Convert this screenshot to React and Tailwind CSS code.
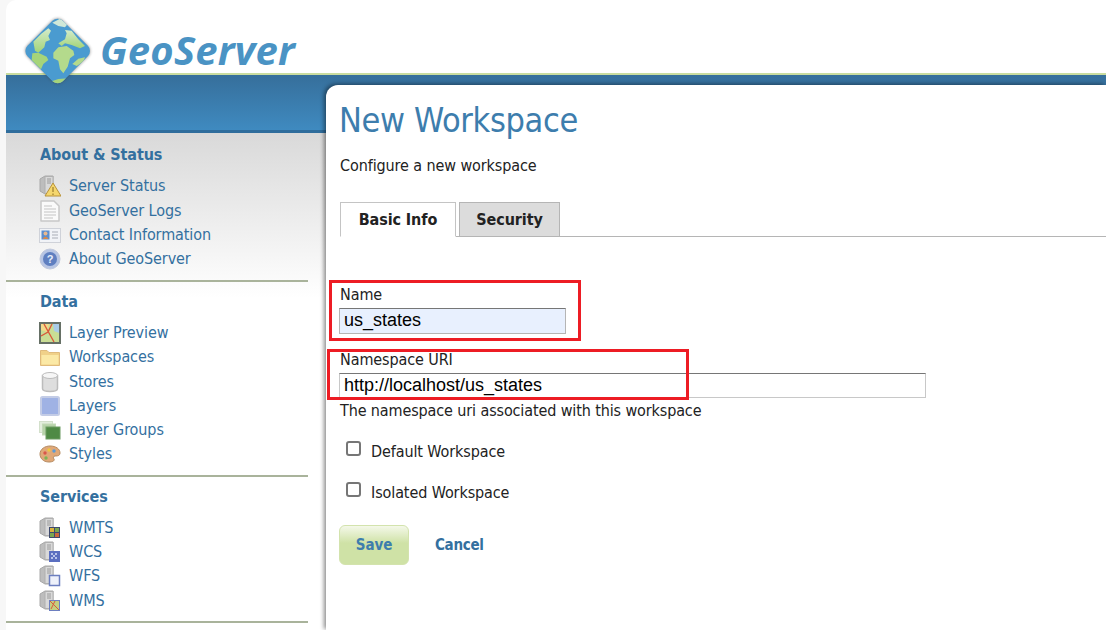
const sans = "font-['DejaVu_Sans_Condensed','DejaVu_Sans',sans-serif] [font-stretch:condensed] tracking-[-0.1px]";

const Logo = () => (
  <svg width="90" height="80" viewBox="0 0 270 240" className="absolute left-[9px] top-[10px]">
    <defs>
      <clipPath id="geo-clip">
        <rect x="53" y="48" width="150" height="150" rx="22" transform="rotate(45 128 123)" />
      </clipPath>
      <filter id="geo-blur" x="-20%" y="-20%" width="140%" height="140%">
        <feGaussianBlur stdDeviation="5" />
      </filter>
      <linearGradient id="geo-land" x1="0" y1="0" x2="0" y2="1">
        <stop offset="0" stopColor="#d3ebcb" />
        <stop offset="1" stopColor="#a4d477" />
      </linearGradient>
    </defs>
    <rect x="53" y="48" width="150" height="150" rx="22" transform="rotate(45 128 123)" fill="#444" opacity="0.65" filter="url(#geo-blur)" />
    <g clipPath="url(#geo-clip)">
      <rect width="270" height="240" fill="#4a9bd0" />
      <path d="M112 38 L135 26 L158 42 L150 52 L130 48 Z" fill="#cfe8d8" />
      <path d="M55 95 L78 72 L100 55 L108 62 L100 78 L105 90 L92 95 L88 112 L70 128 L60 122 Z" fill="url(#geo-land)" />
      <path d="M52 130 L70 128 L95 140 L100 150 L85 162 L78 178 L65 165 L50 150 Z" fill="#a6d47a" />
      <path d="M130 100 L150 88 L155 70 L150 60 L170 62 L190 88 L210 108 L195 115 L170 105 L150 100 L140 108 Z" fill="url(#geo-land)" />
      <path d="M115 128 L130 112 L155 108 L175 122 L178 135 L165 145 L158 170 L145 190 L135 178 L130 152 L115 145 Z" fill="#b4da8c" />
      <path d="M172 162 L190 146 L210 142 L205 155 L185 168 Z" fill="#b4da8c" />
      <path d="M110 214 L130 207 L160 205 L130 226 Z" fill="#a6d47a" />
    </g>
  </svg>
);

const Server = ({ children }) => (
  <svg width="22" height="22" viewBox="0 0 22 22">
    <path d="M1 4 L6 1 L14 1 L14 19 L6 19 L1 16 Z" fill="#bdbdbd" stroke="#a8a8a8" />
    <rect x="6" y="1.5" width="8" height="17" fill="#d9d9d9" stroke="#b0b0b0" />
    <path d="M8 4 H12 M8 6 H12 M8 8 H12" stroke="#9a9a9a" />
    {children}
  </svg>
);

const icons = {
  status: (
    <Server>
      <path d="M14 8 L22 21 H6 Z" fill="#f5d76e" stroke="#b8923a" />
      <path d="M14 12 V17 M14 18.5 V20" stroke="#8a6a20" />
    </Server>
  ),
  logs: (
    <svg width="22" height="22" viewBox="0 0 22 22">
      <path d="M2 1 H15 L20 6 V21 H2 Z" fill="#fafafa" stroke="#c8c8c8" strokeWidth="1.5" strokeLinejoin="round" />
      <path d="M5 6 H13 M5 9 H17 M5 12 H17 M5 15 H17 M5 18 H14" stroke="#c4c4c4" />
    </svg>
  ),
  contact: (
    <svg width="22" height="22" viewBox="0 0 22 22">
      <rect x="0.5" y="4.5" width="21" height="14" fill="#f1f3f7" stroke="#cfd2d9" />
      <rect x="2.5" y="6.5" width="8" height="9" fill="#5b8fd0" />
      <circle cx="6.5" cy="9.5" r="2" fill="#e9b98f" />
      <path d="M3.5 15 Q6.5 10 9.5 15" fill="#d8894a" />
      <path d="M13 8 H19 M13 11 H19 M13 14 H19" stroke="#a9adb6" />
    </svg>
  ),
  about: (
    <svg width="22" height="22" viewBox="0 0 22 22">
      <circle cx="11" cy="11" r="10" fill="#b7c5e4" stroke="#c0c8dc" />
      <circle cx="11" cy="11" r="7" fill="#5f7fc0" />
      <text x="11" y="15" textAnchor="middle" fontSize="11" fontWeight="700" fill="#e8eefa" fontFamily="Liberation Sans, sans-serif">?</text>
    </svg>
  ),
  preview: (
    <svg width="22" height="22" viewBox="0 0 22 22">
      <rect x="1" y="1" width="20" height="20" fill="#c9dd95" stroke="#667066" strokeWidth="2" />
      <path d="M2 2 H10 L8 10 L2 8 Z" fill="#f3d98a" />
      <path d="M14 2 H20 V11 L15 9 Z" fill="#a9cbe8" />
      <path d="M5 2 L15 20 M13 2 L9 10 L2 14" stroke="#d9583a" strokeWidth="1.4" fill="none" />
    </svg>
  ),
  workspace: (
    <svg width="22" height="22" viewBox="0 0 22 22">
      <path d="M1.5 19.5 V4.5 H8 L10 6.5 H20.5 V19.5 Z" fill="#f0d189" stroke="#e0bb7c" />
      <rect x="2.5" y="9" width="17" height="9.5" fill="#fbe9a6" />
    </svg>
  ),
  store: (
    <svg width="22" height="22" viewBox="0 0 22 22">
      <path d="M3.5 4.5 V17.5 C3.5 21.5 18.5 21.5 18.5 17.5 V4.5 Z" fill="#dedede" stroke="#bcbcbc" strokeWidth="1.5" />
      <ellipse cx="11" cy="4.5" rx="7.5" ry="3" fill="#f6f6f6" stroke="#bcbcbc" />
    </svg>
  ),
  layer: (
    <svg width="22" height="22" viewBox="0 0 22 22">
      <rect x="2" y="2" width="18" height="18" rx="1.5" fill="#9fb2e4" stroke="#c3cce6" strokeWidth="2" />
    </svg>
  ),
  group: (
    <svg width="22" height="22" viewBox="0 0 22 22">
      <rect x="0.5" y="2.5" width="13" height="11" fill="#e3eedd" stroke="#d3e0cb" />
      <rect x="3.5" y="5" width="13" height="11" fill="#b7d3a9" stroke="#c3d9b8" />
      <rect x="7" y="8" width="14" height="12" fill="#4f8a45" stroke="#6c9c63" />
    </svg>
  ),
  styles: (
    <svg width="22" height="22" viewBox="0 0 22 22">
      <path d="M11 3 C17 3 21 6 21 10 C21 13 18 13 16 13 C14 13 14 15 15 16 C16 18 13 19 10 19 C4 19 1 15 1 11 C1 6 6 3 11 3 Z" fill="#e0a878" stroke="#b58a60" />
      <circle cx="6" cy="10" r="1.7" fill="#d9574a" />
      <circle cx="10" cy="7" r="1.7" fill="#f0c83c" />
      <circle cx="15" cy="8" r="1.7" fill="#5b9bd5" />
      <circle cx="7" cy="15" r="1.7" fill="#7db454" />
    </svg>
  ),
  wmts: (
    <Server>
      <rect x="10" y="10" width="11" height="11" fill="#3f4a6e" />
      <rect x="11" y="11" width="4" height="4" fill="#d9b23c" />
      <rect x="16" y="11" width="4" height="4" fill="#7aa650" />
      <rect x="11" y="16" width="4" height="4" fill="#7aa650" />
      <rect x="16" y="16" width="4" height="4" fill="#c9683c" />
    </Server>
  ),
  wcs: (
    <Server>
      <rect x="10" y="10" width="11" height="11" fill="#5b6fc0" />
      <path d="M12 12 h2 v2 h-2 Z M16 12 h2 v2 h-2 Z M14 14 h2 v2 h-2 Z M12 16 h2 v2 h-2 Z M16 16 h2 v2 h-2 Z" fill="#b9c4ea" />
    </Server>
  ),
  wfs: (
    <Server>
      <rect x="10.5" y="10.5" width="10" height="10" fill="#eef1fa" stroke="#6d7fc0" strokeWidth="1.5" />
    </Server>
  ),
  wms: (
    <Server>
      <rect x="10.5" y="10.5" width="10" height="10" fill="#c4cf7e" stroke="#6d7fc0" />
      <path d="M11 11 L20 20 M16 11 L12 19" stroke="#d9583a" />
    </Server>
  ),
};

const sections = [
  {
    title: "About & Status",
    top: "pt-[11.2px] pb-[8.8px]",
    items: [
      ["status", "Server Status"],
      ["logs", "GeoServer Logs"],
      ["contact", "Contact Information"],
      ["about", "About GeoServer"],
    ],
  },
  {
    title: "Data",
    top: "pt-[8.6px] pb-[8.4px]",
    items: [
      ["preview", "Layer Preview"],
      ["workspace", "Workspaces"],
      ["store", "Stores"],
      ["layer", "Layers"],
      ["group", "Layer Groups"],
      ["styles", "Styles"],
    ],
  },
  {
    title: "Services",
    top: "pt-[8.6px] pb-[8.4px]",
    items: [
      ["wmts", "WMTS"],
      ["wcs", "WCS"],
      ["wfs", "WFS"],
      ["wms", "WMS"],
    ],
  },
];

const Sidebar = () => (
  <div className="w-[320px] shrink-0 h-[497px] bg-[linear-gradient(#d9d9d9,#ffffff_165px)]">
    {sections.map((s) => (
      <div key={s.title} className={`w-[302px] border-b-2 border-[#a9b39b] ${s.top}`}>
        <h3 className="pl-[34px] h-[22px] leading-[22px] text-[16px] font-bold text-[#34709f]">{s.title}</h3>
        <ul className="mt-[8px] pl-[33px]">
          {s.items.map(([icon, label]) => (
            <li key={label} className="flex items-center gap-[8px] h-[24.3px] text-[16px] text-[#34709f]">
              {icons[icon]}
              <span>{label}</span>
            </li>
          ))}
        </ul>
      </div>
    ))}
  </div>
);

const Main = () => (
  <div className="relative flex-1 -mt-[48px] h-[545px] bg-white rounded-tl-[12px] shadow-[-2px_-1px_4px_rgba(0,0,0,0.45)] pl-[14px] text-[#222222]">
    <h1 className="pt-[13px] h-[58px] leading-[44px] text-[34px] tracking-[-0.35px] -ml-px text-[#3d7dad]">New Workspace</h1>
    <p className="mt-[11px] h-[24px] leading-[24px] text-[16px]">Configure a new workspace</p>
    <div className="mt-[24px] flex items-end gap-[3px] h-[35px] border-b border-[#b5b5b5]">
      <div className="w-[116px] h-[35px] -mb-px flex items-center justify-center bg-white border border-[#c4c4c4] border-b-white text-[16px] font-bold text-[#222222]">Basic Info</div>
      <div className="w-[101px] h-[35px] -mb-px flex items-center justify-center bg-[#dcdcdc] border border-[#b5b5b5] text-[16px] font-bold text-[#222222]">Security</div>
    </div>
    <label className="block mt-[48px] h-[20px] leading-[20px] text-[16px]">Name</label>
    <input
      readOnly
      value="us_states"
      className="block mt-[3px] -ml-px w-[227px] h-[26px] pl-[4px] pr-[3px] pb-[1px] bg-[#e8f0fe] border border-[#b5b5b5] border-t-[#767676] font-['Liberation_Sans',sans-serif] tracking-normal text-[18px] text-black outline-none"
    />
    <label className="block mt-[16px] h-[20px] leading-[20px] text-[16px]">Namespace URI</label>
    <input
      readOnly
      value="http://localhost/us_states"
      className="block mt-[3px] -ml-px w-[587px] h-[25px] pl-[4px] pr-[3px] bg-white border border-[#c8c8c8] border-t-[#767676] font-['Liberation_Sans',sans-serif] tracking-normal text-[18px] text-black outline-none"
    />
    <p className="mt-[3px] h-[20px] leading-[20px] text-[16px] tracking-[-0.12px]">The namespace uri associated with this workspace</p>
    <div className="mt-[20px] ml-[6px] flex items-center gap-[10px] h-[22px] text-[16px]">
      <span className="w-[15px] h-[15px] -mt-[7px] bg-white border-2 border-[#767676] rounded-[3px]" />
      <span>Default Workspace</span>
    </div>
    <div className="mt-[19px] ml-[6px] flex items-center gap-[10px] h-[22px] text-[16px]">
      <span className="w-[15px] h-[15px] -mt-[7px] bg-white border-2 border-[#767676] rounded-[3px]" />
      <span>Isolated Workspace</span>
    </div>
    <div className="mt-[21px] -ml-px flex items-center gap-[26px]">
      <button className="w-[70px] h-[40px] rounded-[6px] border border-[#d3e3ad] bg-[linear-gradient(#f4f8e9,#cfe2a6_45%)] text-[15px] font-bold text-[#3d7dad]">Save</button>
      <a className="text-[15px] tracking-[-0.3px] font-bold text-[#34709f]">Cancel</a>
    </div>
  </div>
);

export default function App() {
  return (
    <div className={`relative h-[630px] overflow-hidden bg-[#f7f7f7] pl-[6px] ${sans}`}>
      <div className="relative h-full bg-white rounded-tl-[10px]">
        <Logo />
        <div className="h-[73px] flex items-end pl-[94px]">
          <span className="font-['Open_Sans',sans-serif] [font-stretch:normal] tracking-[0.2px] italic font-bold text-[40px] leading-[46px] text-[#4a93c4]">GeoServer</span>
        </div>
        <div className="h-[2px] bg-[#c9dc9f]" />
        <div className="h-[58px] bg-[linear-gradient(#366f9b,#3f8ac0)] border-b-[3px] border-[#2f6d9c]" />
        <div className="flex">
          <Sidebar />
          <Main />
        </div>
      </div>
      {/* red annotation boxes drawn over the form */}
      <div className="absolute left-[329px] top-[280px] w-[252px] h-[61px] border-[3px] border-[#ed1c24]" />
      <div className="absolute left-[327px] top-[349px] w-[362px] h-[51px] border-[3px] border-[#ed1c24]" />
    </div>
  );
}
